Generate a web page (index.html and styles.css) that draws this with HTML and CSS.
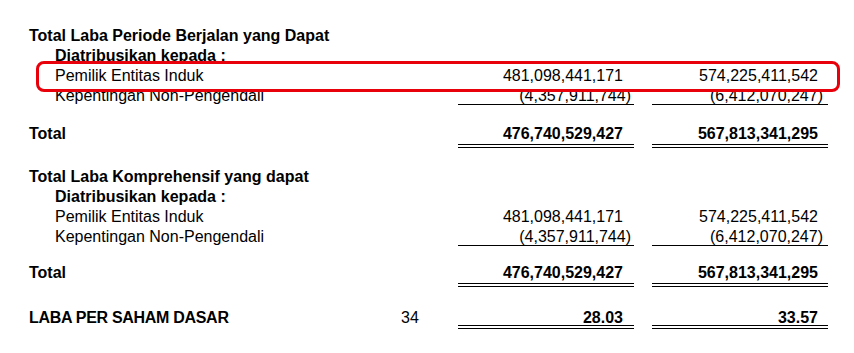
FILE: index.html
```html
<!DOCTYPE html>
<html lang="id">
<head>
<meta charset="utf-8">
<title>Laba Periode Berjalan</title>
<link rel="stylesheet" href="styles.css">
</head>
<body>
<div class="statement">
  <section class="block block-first">
    <div class="row bold"><div class="label">Total Laba Periode Berjalan yang Dapat</div></div>
    <div class="row bold"><div class="label sub">Diatribusikan kepada :</div></div>
    <div class="row highlight">
      <div class="label sub">Pemilik Entitas Induk</div><div class="note"></div>
      <div class="num">481,098,441,171</div><div class="num">574,225,411,542</div>
    </div>
    <div class="row">
      <div class="label sub">Kepentingan Non-Pengendali</div><div class="note"></div>
      <div class="num under">(4,357,911,744<span class="paren">)</span></div>
      <div class="num under">(6,412,070,247<span class="paren">)</span></div>
    </div>
    <div class="row bold total total-first">
      <div class="label">Total</div><div class="note"></div>
      <div class="num dbl">476,740,529,427</div><div class="num dbl">567,813,341,295</div>
    </div>
  </section>

  <section class="block block-second">
    <div class="row bold"><div class="label">Total Laba Komprehensif yang dapat</div></div>
    <div class="row bold"><div class="label sub">Diatribusikan kepada :</div></div>
    <div class="row">
      <div class="label sub">Pemilik Entitas Induk</div><div class="note"></div>
      <div class="num">481,098,441,171</div><div class="num">574,225,411,542</div>
    </div>
    <div class="row">
      <div class="label sub">Kepentingan Non-Pengendali</div><div class="note"></div>
      <div class="num under">(4,357,911,744<span class="paren">)</span></div>
      <div class="num under">(6,412,070,247<span class="paren">)</span></div>
    </div>
    <div class="row bold total total-second">
      <div class="label">Total</div><div class="note"></div>
      <div class="num dbl">476,740,529,427</div><div class="num dbl">567,813,341,295</div>
    </div>
  </section>

  <section class="block block-eps">
    <div class="row eps">
      <div class="label caps">LABA PER SAHAM DASAR</div><div class="note">34</div>
      <div class="num dbl short bold">28.03</div><div class="num dbl short bold">33.57</div>
    </div>
  </section>
</div>
</body>
</html>
```
FILE: styles.css
```css
* { box-sizing: border-box; }

html, body {
  margin: 0;
  padding: 0;
  background: #ffffff;
}

body {
  font-family: "Liberation Sans", Arial, sans-serif;
  font-size: 16px;
  color: #000000;
}

.statement {
  padding: 26px 26px 0 29px;
}

.block-second { margin-top: 19px; }
.block-eps { margin-top: 21px; }

.row {
  display: grid;
  grid-template-columns: 1fr 60px 176px 176px;
  column-gap: 18px;
  line-height: 20px;
}

.bold { font-weight: bold; }

.label { white-space: nowrap; }
.label.sub { padding-left: 26px; }

.note { text-align: center; }

.num {
  text-align: right;
  white-space: nowrap;
  padding-right: 11px;
}
.num:nth-child(4) { padding-right: 10px; }

.paren { margin-right: -8px; }
.num:nth-child(4) .paren { margin-right: -5px; }

.num.under {
  height: 19px;
  border-bottom: 1px solid #000;
}

.num.dbl {
  border-bottom: 4px double #000;
}

.total-first { margin-top: 18px; }
.total-second { margin-top: 16px; }

.num.short { height: 21px; }

.caps { letter-spacing: -0.3px; font-weight: bold; }

.highlight {
  position: relative;
  z-index: 1;
}
.highlight::before {
  content: "";
  position: absolute;
  top: -5px;
  bottom: -6px;
  left: 7px;
  right: -12px;
  border: 3px solid #e8000b;
  border-radius: 8px;
  background: #ffffff;
  z-index: -1;
}
```
